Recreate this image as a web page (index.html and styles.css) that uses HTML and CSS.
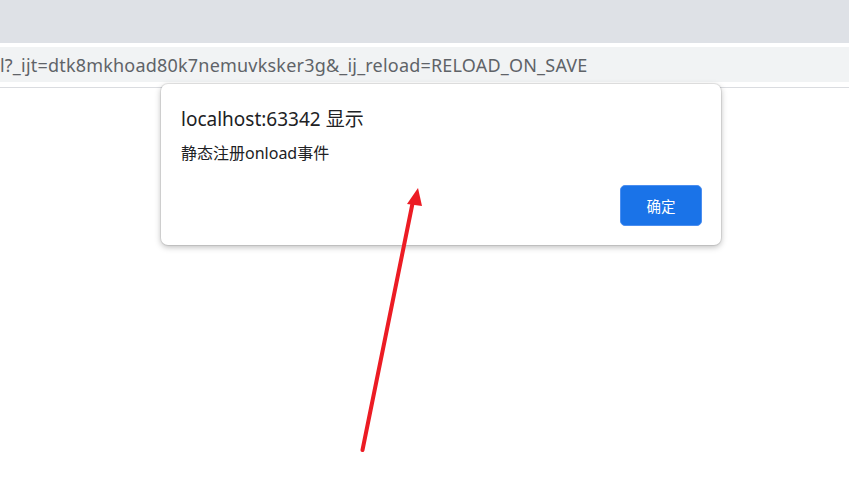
FILE: index.html
```html
<!DOCTYPE html>
<html lang="zh-CN">
<head>
<meta charset="utf-8">
<title>onload</title>
<link rel="stylesheet" href="styles.css">
</head>
<body>
<div class="tabstrip"></div>
<div class="toolbar">
  <div class="omnibox"><span class="url">l?_ijt=dtk8mkhoad80k7nemuvksker3g&amp;_ij_reload=RELOAD_ON_SAVE</span></div>
</div>
<main class="page"></main>

<div class="dialog">
  <div class="dialog-title">localhost:63342 显示</div>
  <div class="dialog-msg">静态注册onload事件</div>
  <div class="dialog-actions"><button class="ok">确定</button></div>
</div>

<svg class="annot" width="849" height="486" viewBox="0 0 849 486">
  <line x1="362.5" y1="450" x2="413" y2="201" stroke="#ec1c24" stroke-width="4" stroke-linecap="round"/>
  <polygon points="418,188 407,204 422,206" fill="#ec1c24"/>
</svg>
</body>
</html>
```
FILE: styles.css
```css
html, body {
  margin: 0;
  padding: 0;
  background: #ffffff;
  width: 849px;
  height: 486px;
  overflow: hidden;
  font-family: "Noto Sans", "Noto Sans CJK SC", sans-serif;
}

.tabstrip {
  height: 43px;
  background: #dee1e6;
}

.toolbar {
  height: 45px;
  background: #ffffff;
  border-bottom: 1px solid #dadce0;
  padding-top: 4px;
  box-sizing: border-box;
}

.omnibox {
  height: 35px;
  background: #f1f3f4;
  display: flex;
  align-items: center;
  overflow: hidden;
  white-space: nowrap;
}

.url {
  font-size: 18px;
  color: #5f6368;
  letter-spacing: 0.2px;
}

.page {
  height: 398px;
}

.dialog {
  position: absolute;
  left: 161px;
  top: 84px;
  width: 560px;
  height: 161px;
  box-sizing: border-box;
  background: #ffffff;
  border-radius: 7px;
  box-shadow: 0 0 0 1px rgba(0,0,0,0.08), 0 2px 6px rgba(0,0,0,0.28);
  padding: 23px 19px 19px 20px;
  display: flex;
  flex-direction: column;
}

.dialog-title {
  font-size: 19px;
  line-height: 24px;
  color: #202124;
}

.dialog-msg {
  margin-top: 12px;
  font-size: 16px;
  line-height: 20px;
  color: #202124;
}

.dialog-actions {
  margin-top: 22px;
  display: flex;
  justify-content: flex-end;
}

.ok {
  width: 82px;
  height: 41px;
  border-radius: 5px;
  background: #1a73e8;
  border: 1px solid #4b8ef0;
  color: #ffffff;
  font-family: "Noto Sans CJK SC", sans-serif;
  font-size: 14.5px;
  padding: 0;
}

.annot {
  position: absolute;
  left: 0;
  top: 0;
  pointer-events: none;
}
```
